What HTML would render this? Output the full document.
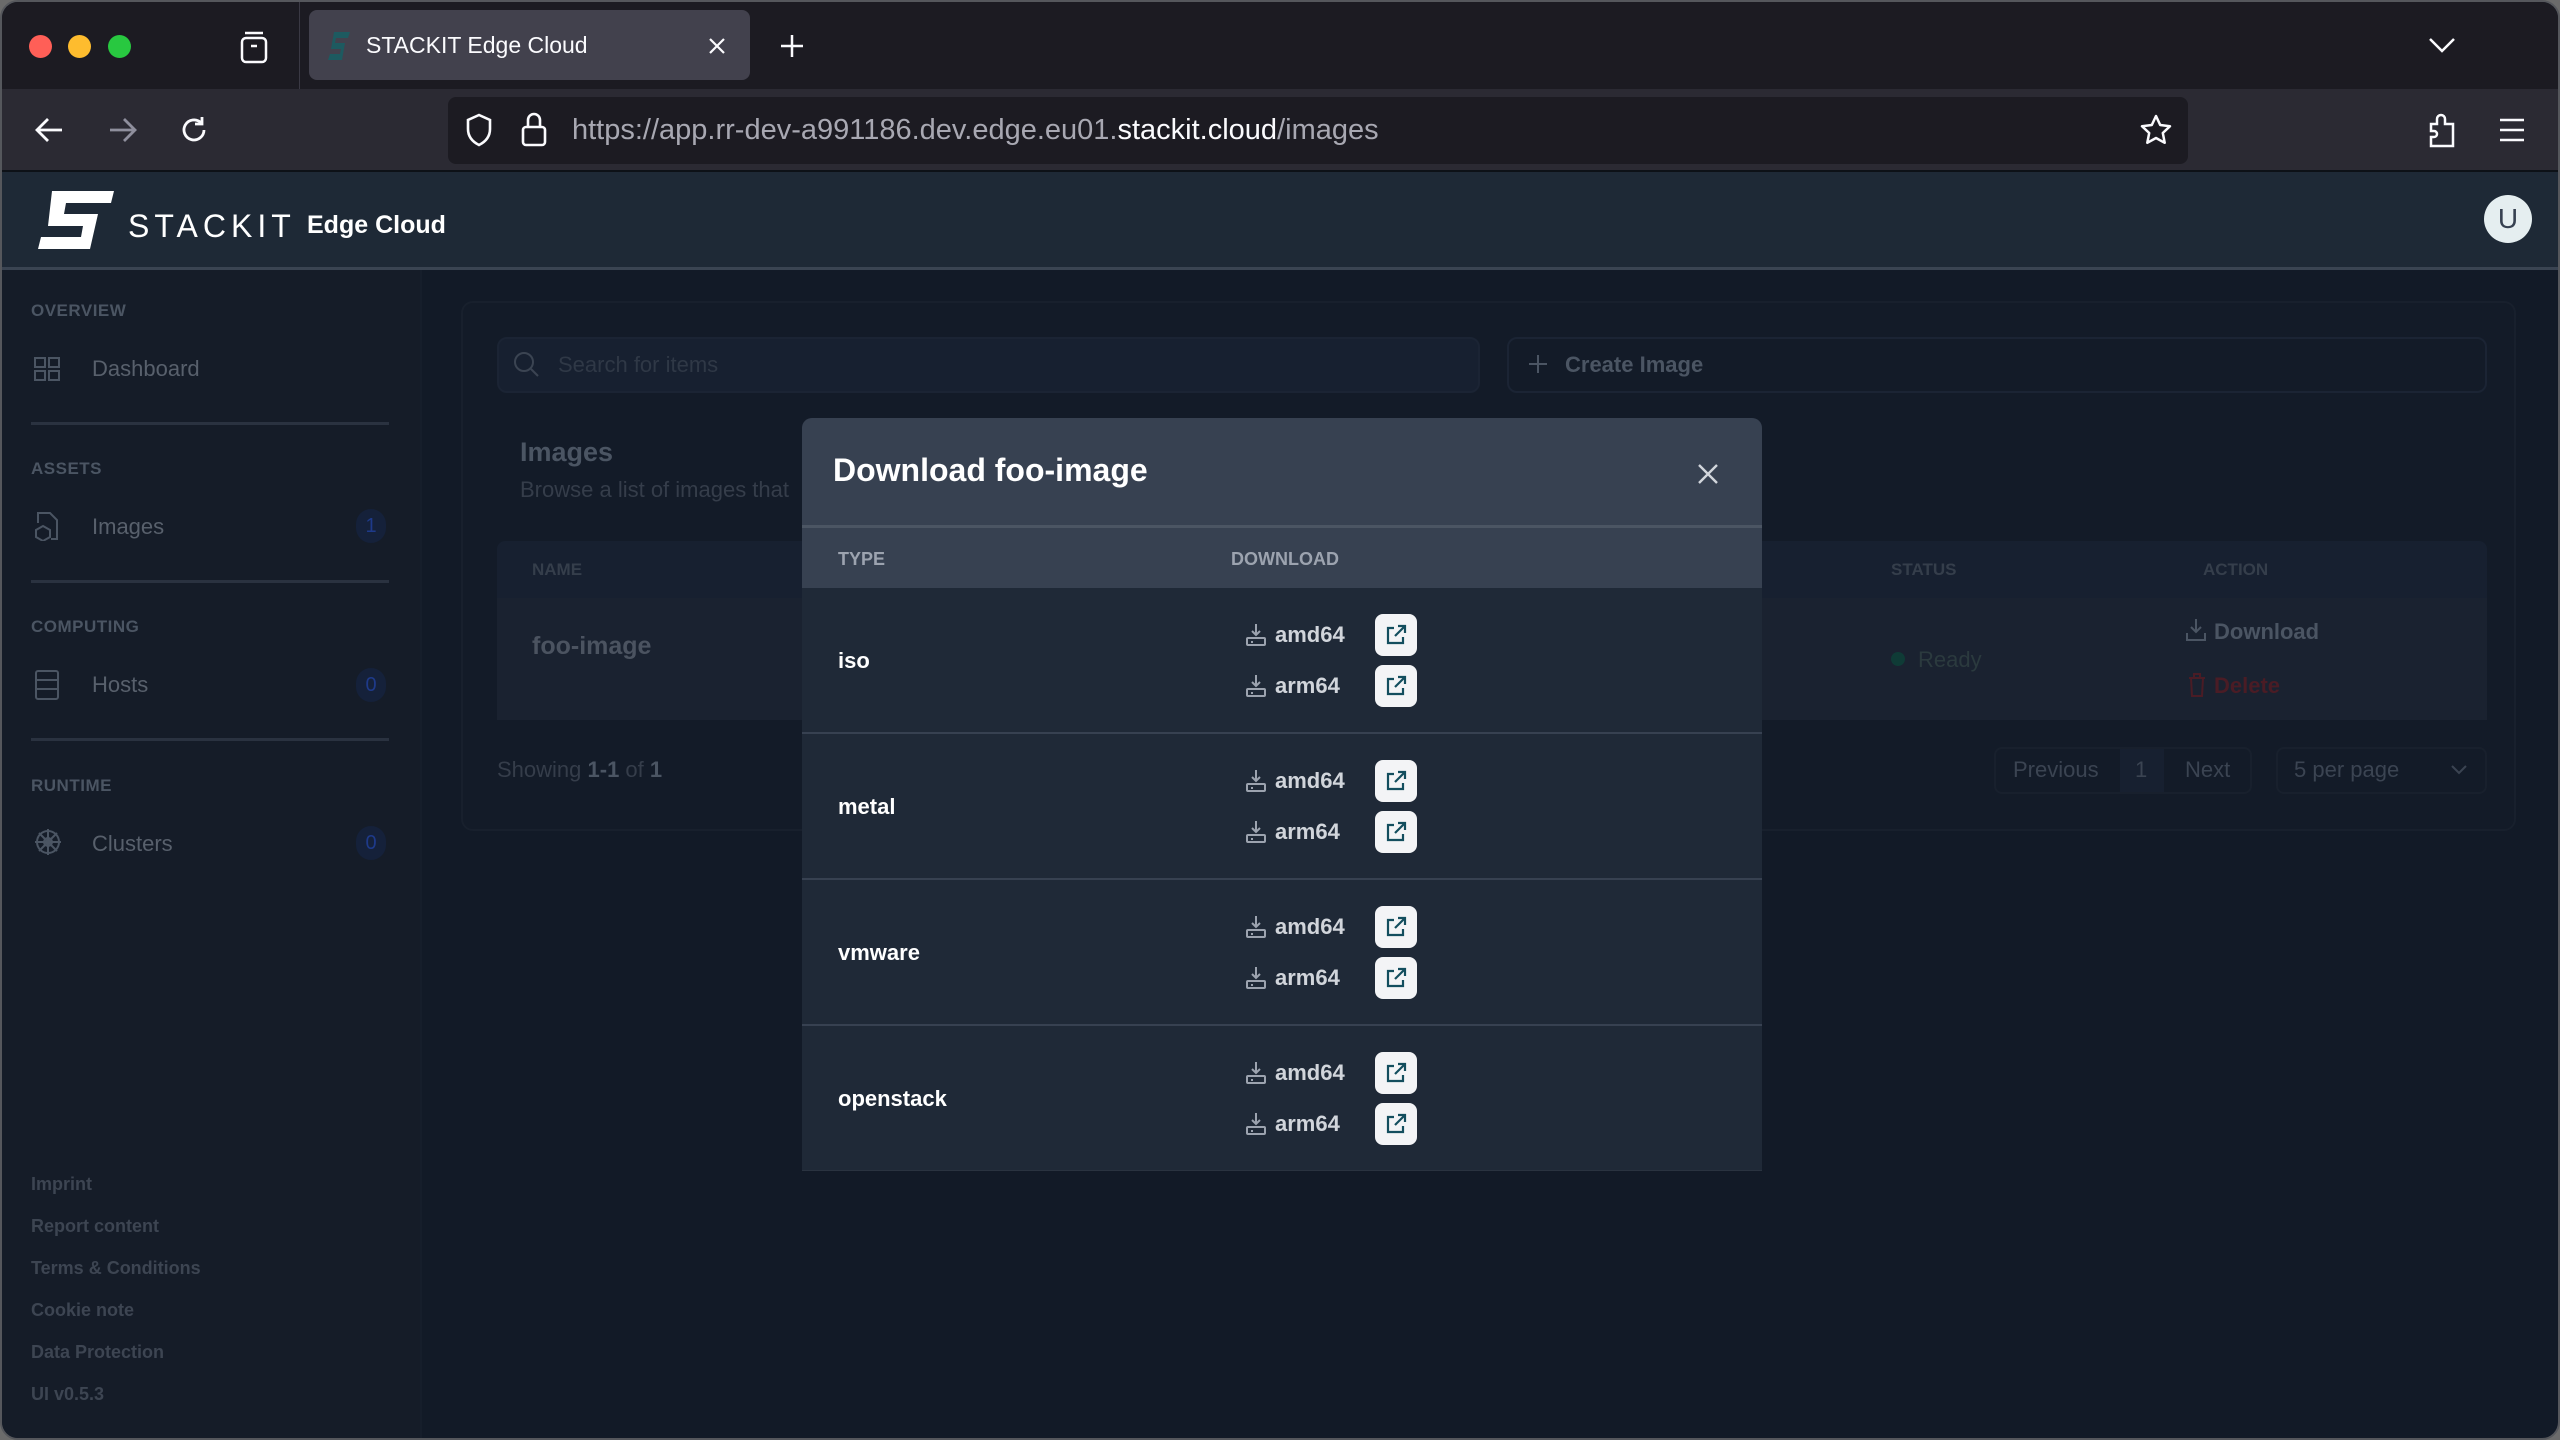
<!DOCTYPE html>
<html><head><meta charset="utf-8">
<style>
*{box-sizing:border-box;margin:0;padding:0}
body{width:2560px;height:1440px;overflow:hidden;background:#6b6b6b;font-family:"Liberation Sans",sans-serif;position:relative}
.win{position:absolute;left:0;top:0;width:2560px;height:1440px;border-radius:18px;overflow:hidden;background:#121a27;border:2px solid #55575c}
.a{position:absolute}
.t{position:absolute;white-space:nowrap}
.lbl{font-size:17px;font-weight:bold;color:#4b5563;letter-spacing:.5px}
.nav{font-size:22px;color:#58606c}
.badge{position:absolute;width:30px;height:34px;border-radius:15px;background:#15213a;color:#1e3a8a;font-size:20px;text-align:center;line-height:34px}
.hr{position:absolute;left:29px;width:358px;height:3px;background:#2a3240}
.foot{font-size:18px;font-weight:bold;color:#3d4552}
.row{position:absolute;left:0;width:960px;height:146px;border-bottom:2px solid #374151;background:#1f2937}
</style></head><body>
<div class="win" id="win">
<!-- tab bar -->
<div class="a" style="left:0;top:0;width:2560px;height:87px;background:#1c1b22"></div>
<div class="a" style="left:27px;top:33px;width:23px;height:23px;border-radius:50%;background:#ff5f57"></div>
<div class="a" style="left:66px;top:33px;width:23px;height:23px;border-radius:50%;background:#febc2e"></div>
<div class="a" style="left:106px;top:33px;width:23px;height:23px;border-radius:50%;background:#28c840"></div>
<svg class="a" style="left:236px;top:28px" width="32" height="34" viewBox="0 0 32 34" fill="none" stroke="#fbfbfe" stroke-width="2.5"><rect x="4" y="8" width="24" height="24" rx="4"/><path d="M7 3h18"/><path d="M13 16h6"/></svg>
<div class="a" style="left:297px;top:0;width:1px;height:87px;background:#3a3944"></div>
<div class="a" style="left:307px;top:8px;width:441px;height:70px;border-radius:8px;background:#42414d"></div>
<svg class="a" style="left:326px;top:30px" width="22" height="28" viewBox="0 0 22 28"><path d="M6 0h16l-2 6H8l-1 5h10l-3 17H0l2-6h10l1-5H3z" fill="#1d5a60"/></svg>
<div class="t" style="left:364px;top:30px;font-size:23px;color:#fbfbfe">STACKIT Edge Cloud</div>
<svg class="a" style="left:705px;top:34px" width="20" height="20" viewBox="0 0 20 20" stroke="#fbfbfe" stroke-width="2.2"><path d="M3 3l14 14M17 3L3 17"/></svg>
<svg class="a" style="left:776px;top:30px" width="28" height="28" viewBox="0 0 28 28" stroke="#fbfbfe" stroke-width="2.5"><path d="M14 3v22M3 14h22"/></svg>
<svg class="a" style="left:2426px;top:34px" width="28" height="18" viewBox="0 0 28 18" fill="none" stroke="#fbfbfe" stroke-width="2.5"><path d="M2 3l12 12L26 3"/></svg>
<!-- toolbar -->
<div class="a" style="left:0;top:87px;width:2560px;height:81px;background:#2b2a33"></div>
<svg class="a" style="left:32px;top:113px" width="32" height="30" viewBox="0 0 32 30" fill="none" stroke="#fbfbfe" stroke-width="2.8"><path d="M28 15H4M14 4L3 15l11 11"/></svg>
<svg class="a" style="left:104px;top:113px" width="32" height="30" viewBox="0 0 32 30" fill="none" stroke="#8f8f9d" stroke-width="2.8"><path d="M4 15h24M18 4l11 11-11 11"/></svg>
<svg class="a" style="left:176px;top:112px" width="32" height="32" viewBox="0 0 32 32" fill="none" stroke="#fbfbfe" stroke-width="2.8"><path d="M26 16a10 10 0 1 1-3-7.2"/><path d="M24 3v7h-7"/></svg>
<div class="a" style="left:446px;top:95px;width:1740px;height:67px;border-radius:8px;background:#1c1b22"></div>
<svg class="a" style="left:463px;top:111px" width="28" height="34" viewBox="0 0 28 34" fill="none" stroke="#fbfbfe" stroke-width="2.6"><path d="M14 2L3 7v9c0 8 5 13 11 16 6-3 11-8 11-16V7z"/></svg>
<svg class="a" style="left:518px;top:109px" width="28" height="36" viewBox="0 0 28 36" fill="none" stroke="#fbfbfe" stroke-width="2.6"><rect x="3" y="16" width="22" height="18" rx="3"/><path d="M8 16V9a6 6 0 0 1 12 0v7"/></svg>
<div class="t" style="left:570px;top:112px;font-size:29px;color:#a8a8b2">https://app.rr-dev-a991186.dev.edge.eu01.<span style="color:#fbfbfe">stackit.cloud</span>/images</div>
<svg class="a" style="left:2137px;top:111px" width="34" height="34" viewBox="0 0 34 34" fill="none" stroke="#fbfbfe" stroke-width="2.5" stroke-linejoin="round"><path d="M17 3l4.2 9 9.8 1.2-7.2 6.8 1.9 9.8L17 25l-8.7 4.8 1.9-9.8L3 13.2l9.8-1.2z"/></svg>
<svg class="a" style="left:2425px;top:110px" width="30" height="36" viewBox="0 0 30 36" fill="none" stroke="#fbfbfe" stroke-width="2.5"><path d="M4 34h22V12h-8V7a4 4 0 0 0-8 0v5H4v7h3a3 3 0 0 1 0 6H4z"/></svg>
<svg class="a" style="left:2496px;top:115px" width="28" height="26" viewBox="0 0 28 26" stroke="#fbfbfe" stroke-width="2.6"><path d="M2 3h24M2 13h24M2 23h24"/></svg>
<!-- app header -->
<div class="a" style="left:0;top:168px;width:2560px;height:100px;background:#1e2936;border-top:2px solid #0d1117;border-bottom:3px solid #3a4452"></div>
<svg class="a" style="left:36px;top:189px" width="76" height="58" viewBox="0 0 76 58"><path d="M14 0h62l-3 12H28l-2 11h34l-8 35H0l3-12h40l2-11H10z" fill="#fff"/></svg>
<div class="t" style="left:126px;top:206px;font-size:32px;color:#fff;letter-spacing:5px;font-weight:300">STACK<b>IT</b></div>
<div class="t" style="left:305px;top:209px;font-size:25px;color:#fff;font-weight:bold">Edge Cloud</div>
<div class="a" style="left:2482px;top:193px;width:48px;height:48px;border-radius:50%;background:#e5eef0;color:#374151;font-size:28px;text-align:center;line-height:48px">U</div>
<!-- sidebar -->
<div class="a" style="left:0;top:268px;width:420px;height:1172px;background:#151c28;border-right:2px solid #161e2b"></div>
<div class="t lbl" style="left:29px;top:299px">OVERVIEW</div>
<svg class="a" style="left:32px;top:355px" width="26" height="24" viewBox="0 0 26 24" fill="none" stroke="#4b5563" stroke-width="2"><rect x="1" y="1" width="10" height="9"/><rect x="15" y="1" width="10" height="9"/><rect x="1" y="14" width="10" height="9"/><rect x="15" y="14" width="10" height="9"/></svg>
<div class="t nav" style="left:90px;top:354px">Dashboard</div>
<div class="hr" style="top:420px"></div>
<div class="t lbl" style="left:29px;top:457px">ASSETS</div>
<svg class="a" style="left:32px;top:509px" width="26" height="30" viewBox="0 0 26 30" fill="none" stroke="#4b5563" stroke-width="2"><path d="M4 12V2h12l7 7v19h-6"/><path d="M9 15l7 4v7l-7 4-7-4v-7z"/></svg>
<div class="t nav" style="left:90px;top:512px">Images</div>
<div class="badge" style="left:354px;top:507px">1</div>
<div class="hr" style="top:578px"></div>
<div class="t lbl" style="left:29px;top:615px">COMPUTING</div>
<svg class="a" style="left:33px;top:668px" width="24" height="30" viewBox="0 0 24 30" fill="none" stroke="#4b5563" stroke-width="2"><rect x="1" y="1" width="22" height="28" rx="2"/><path d="M1 10h22M1 19h22"/></svg>
<div class="t nav" style="left:90px;top:670px">Hosts</div>
<div class="badge" style="left:354px;top:666px">0</div>
<div class="hr" style="top:736px"></div>
<div class="t lbl" style="left:29px;top:774px">RUNTIME</div>
<svg class="a" style="left:32px;top:826px" width="28" height="28" viewBox="0 0 28 28" fill="none" stroke="#4b5563" stroke-width="2"><circle cx="14" cy="14" r="11"/><circle cx="14" cy="14" r="4"/><path d="M14 1v26M1 14h26M5 5l18 18M23 5L5 23"/></svg>
<div class="t nav" style="left:90px;top:829px">Clusters</div>
<div class="badge" style="left:354px;top:824px">0</div>
<div class="t foot" style="left:29px;top:1172px">Imprint</div>
<div class="t foot" style="left:29px;top:1214px">Report content</div>
<div class="t foot" style="left:29px;top:1256px">Terms &amp; Conditions</div>
<div class="t foot" style="left:29px;top:1298px">Cookie note</div>
<div class="t foot" style="left:29px;top:1340px">Data Protection</div>
<div class="t foot" style="left:29px;top:1382px">UI v0.5.3</div>
<!-- main card -->
<div class="a" style="left:459px;top:299px;width:2055px;height:530px;border:2px solid #18202d;border-radius:12px;background:#131b28"></div>
<div class="a" style="left:495px;top:335px;width:983px;height:56px;border-radius:10px;background:#172030;border:2px solid #1b2434"></div>
<svg class="a" style="left:510px;top:348px" width="28" height="28" viewBox="0 0 28 28" fill="none" stroke="#3b4452" stroke-width="2"><circle cx="12" cy="12" r="9"/><path d="M19 19l7 7"/></svg>
<div class="t" style="left:556px;top:350px;font-size:22px;color:#2f3846">Search for items</div>
<div class="a" style="left:1505px;top:335px;width:980px;height:56px;border-radius:10px;border:2px solid #1b2434;background:#131b28"></div>
<svg class="a" style="left:1525px;top:351px" width="22" height="22" viewBox="0 0 22 22" stroke="#4b5563" stroke-width="2"><path d="M11 2v18M2 11h18"/></svg>
<div class="t" style="left:1563px;top:350px;font-size:22px;color:#4b5563;font-weight:bold">Create Image</div>
<div class="t" style="left:518px;top:435px;font-size:27px;color:#4b5563;font-weight:bold">Images</div>
<div class="t" style="left:518px;top:475px;font-size:22px;color:#353d4a">Browse a list of images that</div>
<div class="a" style="left:495px;top:539px;width:1990px;height:57px;background:#172030;border-radius:8px 8px 0 0"></div>
<div class="t" style="left:530px;top:558px;font-size:17px;font-weight:bold;color:#353e4b">NAME</div>
<div class="t" style="left:1889px;top:558px;font-size:17px;font-weight:bold;color:#353e4b">STATUS</div>
<div class="t" style="left:2201px;top:558px;font-size:17px;font-weight:bold;color:#353e4b">ACTION</div>
<div class="a" style="left:495px;top:596px;width:1990px;height:122px;background:#1a2230"></div>
<div class="t" style="left:530px;top:630px;font-size:25px;font-weight:bold;color:#4b5360">foo-image</div>
<div class="a" style="left:1889px;top:650px;width:14px;height:14px;border-radius:50%;background:#0f3b36"></div>
<div class="t" style="left:1916px;top:645px;font-size:22px;color:#2b3a3e">Ready</div>
<svg class="a" style="left:2183px;top:616px" width="22" height="24" viewBox="0 0 22 24" fill="none" stroke="#4b5563" stroke-width="2"><path d="M11 1v13M6 9l5 5 5-5M2 15v7h18v-7"/></svg>
<div class="t" style="left:2212px;top:617px;font-size:22px;color:#4b5563;font-weight:bold">Download</div>
<svg class="a" style="left:2185px;top:670px" width="20" height="26" viewBox="0 0 20 26" fill="none" stroke="#4a1c25" stroke-width="2"><path d="M2 6h16M7 6V2h6v4M4 6l1 18h10l1-18"/></svg>
<div class="t" style="left:2212px;top:671px;font-size:22px;color:#4a1c25;font-weight:bold">Delete</div>
<div class="t" style="left:495px;top:755px;font-size:22px;color:#353d4a">Showing <b style="color:#4b5563">1-1</b> of <b style="color:#4b5563">1</b></div>
<div class="a" style="left:1992px;top:745px;width:258px;height:47px;border:2px solid #18202d;border-radius:8px"></div>
<div class="a" style="left:2118px;top:747px;width:44px;height:43px;background:#172030"></div>
<div class="t" style="left:2011px;top:755px;font-size:22px;color:#3b4452">Previous</div>
<div class="t" style="left:2133px;top:755px;font-size:22px;color:#3b4452">1</div>
<div class="t" style="left:2183px;top:755px;font-size:22px;color:#3b4452">Next</div>
<div class="a" style="left:2274px;top:745px;width:211px;height:47px;border:2px solid #18202d;border-radius:8px"></div>
<div class="t" style="left:2292px;top:755px;font-size:22px;color:#3b4452">5 per page</div>
<svg class="a" style="left:2448px;top:762px" width="18" height="12" viewBox="0 0 18 12" fill="none" stroke="#3b4452" stroke-width="2"><path d="M2 2l7 7 7-7"/></svg>
<!-- modal -->
<div class="a" style="left:800px;top:416px;width:960px;height:753px;border-radius:10px 10px 0 0;overflow:hidden;background:#1f2937">
 <div class="a" style="left:0;top:0;width:960px;height:170px;background:#374151"></div>
 <div class="a" style="left:0;top:107px;width:960px;height:3px;background:#4b5563"></div>
 <div class="t" style="left:31px;top:34px;font-size:32px;font-weight:bold;color:#fff">Download foo-image</div>
 <svg class="a" style="left:895px;top:45px" width="22" height="22" viewBox="0 0 22 22" stroke="#d1d5db" stroke-width="2.4"><path d="M2 2l18 18M20 2L2 20"/></svg>
 <div class="t" style="left:36px;top:131px;font-size:18px;font-weight:bold;color:#9ca3af">TYPE</div>
 <div class="t" style="left:429px;top:131px;font-size:18px;font-weight:bold;color:#9ca3af">DOWNLOAD</div>
 <div class="row" style="top:170px"></div>
 <div class="row" style="top:316px"></div>
 <div class="row" style="top:462px"></div>
 <div class="row" style="top:608px;border-bottom:2px solid #2a3340"></div>
</div>
<div id="rows"></div>
</div>
<script>
(function(){
var types=["iso","metal","vmware","openstack"];var h="";
for(var i=0;i<4;i++){var rt=416+170+i*146;
h+='<div class="t" style="left:836px;top:'+(rt+60)+'px;font-size:22px;font-weight:bold;color:#fff">'+types[i]+'</div>';
var ys=[rt+47,rt+98];var n=["amd64","arm64"];
for(var j=0;j<2;j++){var y=ys[j];
h+='<svg class="a" style="left:1243px;top:'+(y-12)+'px" width="22" height="24" viewBox="0 0 22 24" fill="none" stroke="#9ca3af" stroke-width="2"><path d="M11 1v11M7 8l4 4 4-4"/><rect x="2" y="15" width="18" height="7" rx="1"/><path d="M6 19h2"/></svg>';
h+='<div class="t" style="left:1273px;top:'+(y-13)+'px;font-size:22px;font-weight:bold;color:#d1d5db">'+n[j]+'</div>';
h+='<div class="a" style="left:1373px;top:'+(y-21)+'px;width:42px;height:42px;background:#f3f4f6;border-radius:8px"></div>';
h+='<svg class="a" style="left:1383px;top:'+(y-11)+'px" width="22" height="22" viewBox="0 0 22 22" fill="none" stroke="#134e5e" stroke-width="2.2"><path d="M9 4H3v15h15v-6"/><path d="M13 2h7v7M20 2L10 12"/></svg>';}}
document.getElementById("rows").innerHTML=h;
})();
</script>
</body></html>
